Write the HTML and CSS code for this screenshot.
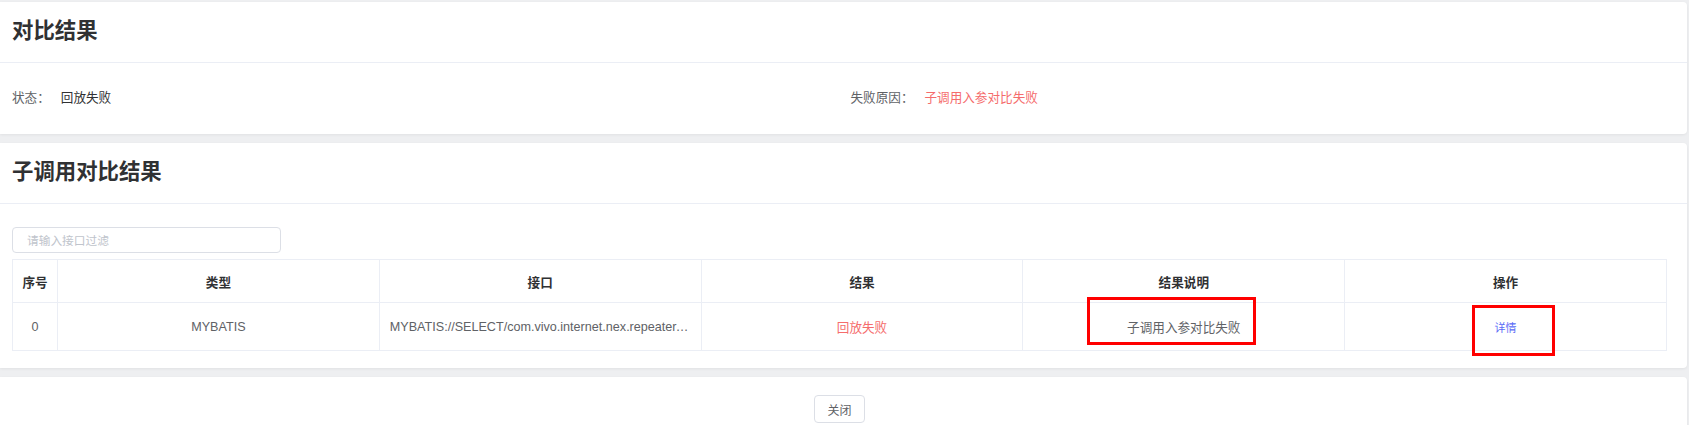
FILE: index.html
```html
<!DOCTYPE html>
<html lang="zh-CN">
<head>
<meta charset="utf-8">
<title>对比结果</title>
<link rel="stylesheet" href="styles.css">
</head>
<body>
<div class="page">
  <section class="card">
    <header class="card-header"><h2 class="card-title">对比结果</h2></header>
    <div class="summary-body">
      <div class="field"><span class="field-label">状态：</span><span class="field-value">回放失败</span></div>
      <div class="field"><span class="field-label">失败原因：</span><span class="field-value danger">子调用入参对比失败</span></div>
    </div>
  </section>
  <section class="card">
    <header class="card-header"><h2 class="card-title">子调用对比结果</h2></header>
    <div class="sub-body">
      <input class="filter-input" type="text" placeholder="请输入接口过滤">
      <div class="table-wrap">
        <table class="result-table">
          <colgroup><col class="col-index"><col><col><col><col><col></colgroup>
          <thead>
            <tr><th class="cell-index">序号</th><th>类型</th><th>接口</th><th>结果</th><th>结果说明</th><th>操作</th></tr>
          </thead>
          <tbody>
            <tr>
              <td class="cell-index">0</td>
              <td>MYBATIS</td>
              <td class="cell-api">MYBATIS://SELECT/com.vivo.internet.nex.repeater.mapper.ReplayRecordMapper.selectByPrimaryKey</td>
              <td class="danger">回放失败</td>
              <td>子调用入参对比失败</td>
              <td><a class="link">详情</a></td>
            </tr>
          </tbody>
        </table>
        <div class="mark mark-desc"></div>
        <div class="mark mark-op"></div>
      </div>
    </div>
  </section>
  <section class="card card-footer">
    <button class="btn" type="button">关闭</button>
  </section>
</div>
</body>
</html>
```
FILE: styles.css
```css
html, body {
  margin: 0;
  padding: 0;
}
body {
  background: #eeeff1;
  font-family: "Liberation Sans", "Noto Sans CJK SC", sans-serif;
  color: #606266;
  font-size: 12.6px;
}
.page {
  padding-top: 2px;
}
.card {
  background: #fff;
  margin-right: 2px;
  margin-bottom: 9px;
  border-radius: 0 4px 4px 0;
  box-shadow: 0 1px 3px rgba(0, 0, 0, 0.06);
}
.card-header {
  height: 60px;
  border-bottom: 1px solid #ebeef5;
  padding-left: 12px;
  display: flex;
  align-items: center;
}
.card-title {
  margin: 0;
  font-size: 21.4px;
  font-weight: bold;
  line-height: 1;
  color: #303133;
}
.summary-body {
  height: 71px;
  display: grid;
  grid-template-columns: 1fr 1fr;
  column-gap: 22px;
  align-items: center;
  padding: 0 20px 0 12px;
}
.field {
  display: flex;
  align-items: center;
  line-height: 1.2;
}
.field-label {
  color: #606266;
  margin-right: 11px;
}
.field-value {
  color: #303133;
}
.danger {
  color: #f56c6c;
}
.field-value.danger {
  color: #f56c6c;
}
.sub-body {
  padding: 23px 20px 17px 12px;
}
.filter-input {
  display: block;
  box-sizing: border-box;
  width: 269px;
  height: 26px;
  margin: 0 0 6px 0;
  padding: 0 14px;
  border: 1px solid #dcdfe6;
  border-radius: 4px;
  font-family: inherit;
  font-size: 11.7px;
  color: #606266;
  outline: none;
}
.filter-input::placeholder {
  color: #c0c4cc;
}
.table-wrap {
  position: relative;
}
.result-table {
  width: 100%;
  table-layout: fixed;
  border-collapse: collapse;
  border: 1px solid #ebeef5;
}
.col-index {
  width: 45px;
}
.result-table th,
.result-table td {
  border: 1px solid #ebeef5;
  padding: 0 10px;
  text-align: center;
  white-space: nowrap;
  overflow: hidden;
  text-overflow: ellipsis;
  font-size: 12.6px;
}
.result-table th.cell-index,
.result-table td.cell-index {
  padding: 0 2px;
  text-overflow: clip;
}
.result-table th {
  height: 42px;
  color: #303133;
  font-weight: bold;
}
.result-table td {
  height: 47px;
  color: #606266;
}
.result-table td.danger {
  color: #f56c6c;
}
.result-table td.cell-api {
  text-align: left;
}
.link {
  color: #5a6cf6;
  font-size: 11px;
  cursor: pointer;
}
.mark {
  position: absolute;
  box-sizing: border-box;
  border: 3px solid #ff0000;
}
.mark-desc {
  left: 1075px;
  top: 38px;
  width: 169px;
  height: 48px;
}
.mark-op {
  left: 1460px;
  top: 46px;
  width: 83px;
  height: 51px;
}
.card-footer {
  padding: 18px 20px 18px 12px;
  text-align: center;
  margin-bottom: 0;
}
.btn {
  height: 28px;
  padding: 0 12px;
  font-family: inherit;
  font-size: 12px;
  color: #606266;
  background: #fff;
  border: 1px solid #dcdfe6;
  border-radius: 4px;
}
```
